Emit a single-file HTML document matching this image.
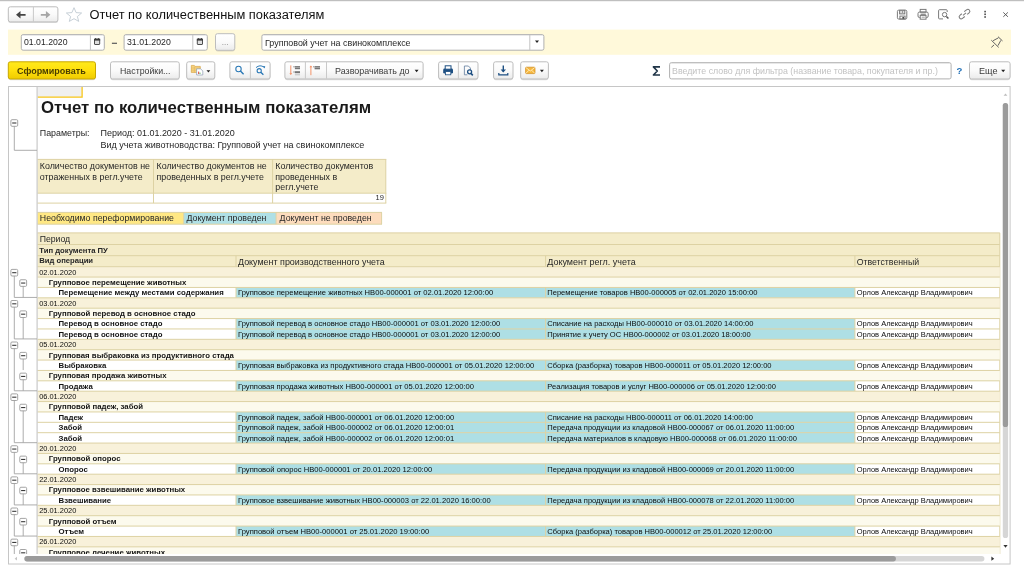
<!DOCTYPE html>
<html lang="ru"><head><meta charset="utf-8"><title>Отчет по количественным показателям</title>
<style>
html,body{margin:0;padding:0;background:#fff;}
body{width:1024px;height:572px;overflow:hidden;position:relative;filter:blur(0.35px);font-family:"Liberation Sans",sans-serif;}
svg{position:absolute;left:0;top:0;}
.t{position:absolute;white-space:nowrap;font-family:"Liberation Sans",sans-serif;}
#clip{position:absolute;left:9px;top:87px;width:992px;height:467px;overflow:hidden;}
#clip>div{position:absolute;left:-9px;top:-87px;width:1024px;height:572px;}
</style></head><body>
<svg width="1024" height="572" viewBox="0 0 1024 572">
<defs>
<linearGradient id="gb" x1="0" y1="0" x2="0" y2="1"><stop offset="0" stop-color="#ffffff"/><stop offset="0.5" stop-color="#fafafa"/><stop offset="1" stop-color="#ebebeb"/></linearGradient>
<linearGradient id="yb" x1="0" y1="0" x2="0" y2="1"><stop offset="0" stop-color="#ffea1c"/><stop offset="0.5" stop-color="#ffdf0c"/><stop offset="1" stop-color="#efcb00"/></linearGradient>
</defs>
<rect x="0.00" y="0.00" width="1024.00" height="1.20" fill="#bfbfbf" />
<rect x="8.30" y="7.50" width="49.60" height="15.60" rx="2.2" fill="#000" opacity="0.13"/>
<rect x="8.30" y="6.80" width="49.60" height="15.10" rx="2" fill="url(#gb)" stroke="#bdbdbd" stroke-width="1"/>
<line x1="33.40" y1="7.00" x2="33.40" y2="21.80" stroke="#c9c9c9" stroke-width="1" />
<path d="M16 14.8 L20.5 11 V13.9 H25.6 V15.7 H20.5 V18.5Z" fill="#444"/>
<path d="M50.4 14.8 L45.9 11 V13.9 H40.8 V15.7 H45.9 V18.5Z" fill="#a6a6a6"/>
<path d="M74 7.7 L76.1 12.6 L81.6 13 L77.4 16.5 L78.7 21.4 L74 18.7 L69.3 21.4 L70.6 16.5 L66.4 13 L71.9 12.6Z" fill="#fff" stroke="#b9c4cd" stroke-width="0.8" stroke-linejoin="miter"/>
<g fill="none" stroke="#7a7a7a" stroke-width="1"><rect x="897.4" y="10.2" width="9.4" height="8.8" rx="1.2"/><rect x="899.6" y="10.3" width="5.2" height="3.6" fill="#dcdcdc"/><rect x="899.9" y="16.1" width="5.2" height="3"/><rect x="902.4" y="17" width="1.7" height="1.7" fill="#444" stroke="none"/><rect x="902" y="11" width="1" height="2" fill="#999" stroke="none"/></g>
<g fill="none" stroke="#7a7a7a" stroke-width="1"><rect x="918" y="12" width="10.2" height="5.6" rx="1.6"/><rect x="920.2" y="9.4" width="5.8" height="2.8"/><rect x="920.2" y="15.4" width="5.8" height="3.8" fill="#fff"/><path d="M920.6 14.2 H925.8" stroke="#555" stroke-width="0.9"/><path d="M921.6 17.2 H924.8" stroke-width="0.7"/></g>
<g fill="none" stroke="#7a7a7a" stroke-width="1"><path d="M947.2 12 V10.6 Q947.2 9.7 946.3 9.7 H939.5 Q938.6 9.7 938.6 10.6 V18 Q938.6 18.9 939.5 18.9 H943"/><circle cx="944.6" cy="14.6" r="2.2"/><path d="M946.4 16.4 L948.4 18.5" stroke="#555" stroke-width="1.4"/></g>
<g fill="none" stroke="#7a7a7a" stroke-width="1.15" stroke="#6a6a6a" transform="rotate(-40 964.5 14.1) translate(964.5 14.1) scale(0.88) translate(-964.5 -14.1)"><path d="M963 16.4 H959.6 A2.3 2.3 0 0 1 959.6 11.8 H962.4"/><path d="M966 11.8 H969.4 A2.3 2.3 0 0 1 969.4 16.4 H966.6"/><path d="M962.2 14.1 H966.8"/></g>
<rect x="984.30" y="10.80" width="1.60" height="1.60" fill="#4a4a4a" />
<rect x="984.30" y="13.50" width="1.60" height="1.60" fill="#4a4a4a" />
<rect x="984.30" y="16.20" width="1.60" height="1.60" fill="#4a4a4a" />
<path d="M1003.3 12.4 L1007.9 16.8 M1007.9 12.4 L1003.3 16.8" stroke="#505050" stroke-width="0.9" fill="none"/>
<rect x="8.00" y="29.60" width="1003.00" height="25.20" fill="#fff9da" />
<rect x="21.30" y="34.60" width="83.00" height="15.60" rx="1.8" fill="#fff" stroke="#b0b0b0" stroke-width="1"/>
<line x1="22.30" y1="35.40" x2="103.30" y2="35.40" stroke="#e4e4e4" stroke-width="0.8" />
<line x1="90.40" y1="35.00" x2="90.40" y2="50.00" stroke="#c4c4c4" stroke-width="1" />
<g><rect x="94.50" y="39.20" width="5.2" height="5.3" rx="0.5" fill="#dedede" stroke="#3c3c3c" stroke-width="0.9"/><rect x="94.05" y="38.70" width="6.1" height="1.9" fill="#3c3c3c"/><rect x="95.10" y="38.10" width="0.9" height="1.2" fill="#3c3c3c"/><rect x="98.20" y="38.10" width="0.9" height="1.2" fill="#3c3c3c"/></g>
<rect x="111.90" y="42.70" width="5.10" height="1.20" fill="#5a5a5a" />
<rect x="124.10" y="34.60" width="83.20" height="15.60" rx="1.8" fill="#fff" stroke="#b0b0b0" stroke-width="1"/>
<line x1="125.10" y1="35.40" x2="206.30" y2="35.40" stroke="#e4e4e4" stroke-width="0.8" />
<line x1="192.80" y1="35.00" x2="192.80" y2="50.00" stroke="#c4c4c4" stroke-width="1" />
<g><rect x="197.30" y="39.20" width="5.2" height="5.3" rx="0.5" fill="#dedede" stroke="#3c3c3c" stroke-width="0.9"/><rect x="196.85" y="38.70" width="6.1" height="1.9" fill="#3c3c3c"/><rect x="197.90" y="38.10" width="0.9" height="1.2" fill="#3c3c3c"/><rect x="201.00" y="38.10" width="0.9" height="1.2" fill="#3c3c3c"/></g>
<rect x="215.50" y="34.40" width="19.30" height="17.10" rx="2.2" fill="#000" opacity="0.13"/>
<rect x="215.50" y="33.70" width="19.30" height="16.60" rx="2" fill="url(#gb)" stroke="#bdbdbd" stroke-width="1"/>
<rect x="261.90" y="34.60" width="282.00" height="15.60" rx="1.8" fill="#fff" stroke="#b0b0b0" stroke-width="1"/>
<line x1="262.90" y1="35.40" x2="542.90" y2="35.40" stroke="#e4e4e4" stroke-width="0.8" />
<line x1="529.80" y1="35.00" x2="529.80" y2="50.00" stroke="#c4c4c4" stroke-width="1" />
<path d="M535.00 40.60 L539.00 40.60 L537.00 43.10Z" fill="#222"/>
<path d="M998 36.7 L1002.5 40.9 M998.3 37.9 L993.1 40.7 M1000.8 40.4 L998 45.6 M991.3 40.2 L998.7 47.4 M994.1 44.9 L991.3 47.4" fill="none" stroke="#5c5c5c" stroke-width="0.95"/>
<rect x="8.30" y="62.50" width="87.20" height="17.70" rx="2.2" fill="#000" opacity="0.13"/>
<rect x="8.30" y="61.80" width="87.20" height="17.20" rx="2" fill="url(#yb)" stroke="#c9a800" stroke-width="1"/>
<rect x="110.50" y="62.50" width="68.80" height="17.70" rx="2.2" fill="#000" opacity="0.13"/>
<rect x="110.50" y="61.80" width="68.80" height="17.20" rx="2" fill="url(#gb)" stroke="#bdbdbd" stroke-width="1"/>
<rect x="186.70" y="62.50" width="28.10" height="17.70" rx="2.2" fill="#000" opacity="0.13"/>
<rect x="186.70" y="61.80" width="28.10" height="17.20" rx="2" fill="url(#gb)" stroke="#bdbdbd" stroke-width="1"/>
<g><path d="M191.3 65.4 h3 l0.8 1 h5.2 v6 h-9z" fill="#f6d27f" stroke="#d7a545" stroke-width="0.7"/><path d="M191.3 68 h9 M191.3 70.2 h9 M194.4 66.4 v6 " stroke="#dcae55" stroke-width="0.45"/><path d="M196.6 68.8 h4 l2.2 2.2 v4 h-6.2z" fill="#fff" stroke="#8b9cb3" stroke-width="0.7"/><rect x="198" y="71.6" width="1.2" height="2.4" fill="#e0605c"/><rect x="199.4" y="72.6" width="1.1" height="1.4" fill="#6cc06c"/></g>
<path d="M206.50 70.15 L210.30 70.15 L208.40 72.52Z" fill="#222"/>
<rect x="229.90" y="62.50" width="40.20" height="17.70" rx="2.2" fill="#000" opacity="0.13"/>
<rect x="229.90" y="61.80" width="40.20" height="17.20" rx="2" fill="url(#gb)" stroke="#bdbdbd" stroke-width="1"/>
<line x1="250.40" y1="62.00" x2="250.40" y2="78.80" stroke="#c9c9c9" stroke-width="1" />
<g fill="none" stroke="#2877b5" stroke-width="1.05"><circle cx="238.5" cy="69" r="2.7"/><path d="M240.4 71 L243.6 74.2" stroke-width="1.35"/></g>
<g fill="none" stroke="#2877b5" stroke-width="1.05"><circle cx="259.2" cy="70.7" r="2.1"/><path d="M260.8 72.3 L263.4 74.7" stroke-width="1.3"/><path d="M256 67.6 Q260 64.2 264 67.2" stroke-width="0.95"/><path d="M262.8 66 L265.2 66.2 L264.8 68.6Z" fill="#2877b5" stroke="none"/></g>
<rect x="284.90" y="62.50" width="138.20" height="17.70" rx="2.2" fill="#000" opacity="0.13"/>
<rect x="284.90" y="61.80" width="138.20" height="17.20" rx="2" fill="url(#gb)" stroke="#bdbdbd" stroke-width="1"/>
<line x1="305.40" y1="62.00" x2="305.40" y2="78.80" stroke="#c9c9c9" stroke-width="1" />
<line x1="326.50" y1="62.00" x2="326.50" y2="78.80" stroke="#c9c9c9" stroke-width="1" />
<g><path d="M290.8 65.4 V73.6" stroke="#f2885a" stroke-width="0.9"/><path d="M289.4 73.2 h2.8 l-1.4 1.9z" fill="#f2885a"/></g>
<rect x="294.90" y="66.10" width="5.10" height="3.10" fill="#5e5e5e" opacity="0.85"/>
<rect x="293.40" y="66.30" width="1.20" height="1.00" fill="#777" />
<rect x="294.90" y="67.40" width="5.10" height="0.50" fill="#cfcfcf" />
<rect x="294.90" y="71.20" width="5.10" height="1.90" fill="#5e5e5e" opacity="0.85"/>
<rect x="293.40" y="71.50" width="1.20" height="1.00" fill="#777" />
<rect x="294.90" y="73.60" width="5.10" height="1.80" fill="#bdbdbd" opacity="0.7"/>
<g><path d="M310.9 66.8 V75.2" stroke="#f2885a" stroke-width="0.9"/><path d="M309.5 67.3 h2.8 l-1.4 -1.9z" fill="#f2885a"/></g>
<rect x="314.60" y="66.10" width="5.40" height="3.20" fill="#5e5e5e" opacity="0.85"/>
<rect x="313.20" y="66.30" width="1.10" height="1.00" fill="#777" />
<rect x="314.60" y="67.50" width="5.40" height="0.50" fill="#cfcfcf" />
<path d="M414.60 69.80 L418.60 69.80 L416.60 72.30Z" fill="#222"/>
<rect x="438.60" y="62.50" width="39.40" height="17.70" rx="2.2" fill="#000" opacity="0.13"/>
<rect x="438.60" y="61.80" width="39.40" height="17.20" rx="2" fill="url(#gb)" stroke="#bdbdbd" stroke-width="1"/>
<line x1="458.40" y1="62.00" x2="458.40" y2="78.80" stroke="#c9c9c9" stroke-width="1" />
<g><rect x="443.2" y="68.6" width="9.8" height="5" rx="1.4" fill="#1d4f82"/><rect x="445.2" y="65.8" width="5.8" height="3.4" fill="#fff" stroke="#1d4f82" stroke-width="1"/><rect x="445.4" y="71.6" width="5.4" height="3.2" fill="#fff" stroke="#1d4f82" stroke-width="0.8"/></g>
<g fill="none"><path d="M464.4 66 h4 l2 2 v2 M464.4 66 v8.8 h3" stroke="#6f88a6" stroke-width="0.9"/><circle cx="469.6" cy="71.8" r="2" stroke="#1d4f82" stroke-width="1.3"/><path d="M471 73.4 L472.8 75.4" stroke="#1d4f82" stroke-width="1.6"/></g>
<rect x="493.60" y="62.50" width="19.40" height="17.70" rx="2.2" fill="#000" opacity="0.13"/>
<rect x="493.60" y="61.80" width="19.40" height="17.20" rx="2" fill="url(#gb)" stroke="#bdbdbd" stroke-width="1"/>
<g fill="none" stroke="#1d4f82"><path d="M503.3 65.6 V71.4" stroke-width="1.4"/><path d="M500.6 69.6 h5.4 l-2.7 3z" fill="#1d4f82" stroke="none"/><path d="M498.8 73 V74.8 H507.8 V73" stroke-width="1.2"/></g>
<rect x="520.70" y="62.50" width="27.70" height="17.70" rx="2.2" fill="#000" opacity="0.13"/>
<rect x="520.70" y="61.80" width="27.70" height="17.20" rx="2" fill="url(#gb)" stroke="#bdbdbd" stroke-width="1"/>
<g><rect x="525.6" y="67.2" width="9.4" height="6.4" rx="0.8" fill="#f6b73c" stroke="#d18a1a" stroke-width="0.7"/><path d="M525.9 67.6 L530.3 71 L534.7 67.6 M525.9 73.3 L529 70.2 M534.7 73.3 L531.6 70.2" fill="none" stroke="#fff2cf" stroke-width="0.8"/></g>
<path d="M539.90 69.80 L543.90 69.80 L541.90 72.30Z" fill="#222"/>
<path d="M660 66.9 H653.4 L657.3 71 L653.4 75 H660" fill="none" stroke="#1f3447" stroke-width="1.6" stroke-linejoin="round"/>
<rect x="669.60" y="62.70" width="281.50" height="16.20" rx="1.8" fill="#fff" stroke="#b0b0b0" stroke-width="1"/>
<line x1="670.60" y1="63.50" x2="950.10" y2="63.50" stroke="#e4e4e4" stroke-width="0.8" />
<rect x="969.50" y="62.50" width="40.60" height="17.70" rx="2.2" fill="#000" opacity="0.13"/>
<rect x="969.50" y="61.80" width="40.60" height="17.20" rx="2" fill="url(#gb)" stroke="#bdbdbd" stroke-width="1"/>
<path d="M1001.20 69.80 L1005.20 69.80 L1003.20 72.30Z" fill="#222"/>
<rect x="8.5" y="86.5" width="1001.6" height="477.5" fill="#fff" stroke="#c6c6c6" stroke-width="1"/>
<clipPath id="cp"><rect x="9" y="87" width="992" height="467"/></clipPath>
<g clip-path="url(#cp)">
<rect x="37.60" y="87.00" width="44.20" height="10.00" fill="#f0f0f0" />
<path d="M37.6 97.1 H82.1 V87" fill="none" stroke="#f7c61a" stroke-width="1.3"/>
<rect x="37.40" y="159.40" width="348.40" height="33.80" fill="#f4ecc9" />
<rect x="37.40" y="193.20" width="348.40" height="9.90" fill="#fff" />
<line x1="153.50" y1="159.40" x2="153.50" y2="203.10" stroke="#ddd2a3" stroke-width="1" />
<line x1="272.60" y1="159.40" x2="272.60" y2="203.10" stroke="#ddd2a3" stroke-width="1" />
<line x1="385.80" y1="159.40" x2="385.80" y2="203.10" stroke="#ddd2a3" stroke-width="1" />
<line x1="37.40" y1="159.40" x2="386.30" y2="159.40" stroke="#ddd2a3" stroke-width="1" />
<line x1="37.40" y1="193.20" x2="386.30" y2="193.20" stroke="#ddd2a3" stroke-width="1" />
<line x1="37.40" y1="203.10" x2="386.30" y2="203.10" stroke="#ddd2a3" stroke-width="1" />
<rect x="37.40" y="212.40" width="146.30" height="11.80" fill="#ffe884" />
<rect x="183.70" y="212.40" width="92.40" height="11.80" fill="#afe0e6" />
<rect x="276.10" y="212.40" width="105.50" height="11.80" fill="#fddcbd" />
<line x1="183.70" y1="212.40" x2="183.70" y2="224.20" stroke="#ddd2a3" stroke-width="1" />
<line x1="276.10" y1="212.40" x2="276.10" y2="224.20" stroke="#ddd2a3" stroke-width="1" />
<line x1="381.60" y1="212.40" x2="381.60" y2="224.20" stroke="#ddd2a3" stroke-width="1" />
<line x1="37.40" y1="212.40" x2="382.00" y2="212.40" stroke="#ddd2a3" stroke-width="1" />
<line x1="37.40" y1="224.20" x2="382.00" y2="224.20" stroke="#ddd2a3" stroke-width="1" />
<rect x="37.40" y="232.90" width="962.40" height="33.80" fill="#f4ecc9" />
<line x1="37.40" y1="232.90" x2="999.80" y2="232.90" stroke="#ddd2a3" stroke-width="1" />
<line x1="37.40" y1="244.50" x2="999.80" y2="244.50" stroke="#ddd2a3" stroke-width="1" />
<line x1="37.40" y1="255.70" x2="999.80" y2="255.70" stroke="#ddd2a3" stroke-width="1" />
<line x1="236.00" y1="255.70" x2="236.00" y2="266.70" stroke="#ddd2a3" stroke-width="1" />
<line x1="545.60" y1="255.70" x2="545.60" y2="266.70" stroke="#ddd2a3" stroke-width="1" />
<line x1="854.90" y1="255.70" x2="854.90" y2="266.70" stroke="#ddd2a3" stroke-width="1" />
<line x1="999.80" y1="232.90" x2="999.80" y2="554.00" stroke="#ddd2a3" stroke-width="1" />
<rect x="37.40" y="266.70" width="962.40" height="10.38" fill="#f8f1da" />
<line x1="37.40" y1="266.70" x2="999.80" y2="266.70" stroke="#ddd2a3" stroke-width="1" />
<rect x="37.40" y="277.07" width="962.40" height="10.38" fill="#fcfaed" />
<line x1="37.40" y1="277.07" x2="999.80" y2="277.07" stroke="#ddd2a3" stroke-width="1" />
<rect x="236.00" y="287.45" width="618.90" height="10.38" fill="#aedfe5" />
<line x1="236.00" y1="287.45" x2="236.00" y2="297.82" stroke="#ddd2a3" stroke-width="1" />
<line x1="545.60" y1="287.45" x2="545.60" y2="297.82" stroke="#ddd2a3" stroke-width="1" />
<line x1="854.90" y1="287.45" x2="854.90" y2="297.82" stroke="#ddd2a3" stroke-width="1" />
<line x1="37.40" y1="287.45" x2="999.80" y2="287.45" stroke="#ddd2a3" stroke-width="1" />
<rect x="37.40" y="297.82" width="962.40" height="10.38" fill="#f8f1da" />
<line x1="37.40" y1="297.82" x2="999.80" y2="297.82" stroke="#ddd2a3" stroke-width="1" />
<rect x="37.40" y="308.20" width="962.40" height="10.38" fill="#fcfaed" />
<line x1="37.40" y1="308.20" x2="999.80" y2="308.20" stroke="#ddd2a3" stroke-width="1" />
<rect x="236.00" y="318.57" width="618.90" height="10.38" fill="#aedfe5" />
<line x1="236.00" y1="318.57" x2="236.00" y2="328.95" stroke="#ddd2a3" stroke-width="1" />
<line x1="545.60" y1="318.57" x2="545.60" y2="328.95" stroke="#ddd2a3" stroke-width="1" />
<line x1="854.90" y1="318.57" x2="854.90" y2="328.95" stroke="#ddd2a3" stroke-width="1" />
<line x1="37.40" y1="318.57" x2="999.80" y2="318.57" stroke="#ddd2a3" stroke-width="1" />
<rect x="236.00" y="328.95" width="618.90" height="10.38" fill="#aedfe5" />
<line x1="236.00" y1="328.95" x2="236.00" y2="339.32" stroke="#ddd2a3" stroke-width="1" />
<line x1="545.60" y1="328.95" x2="545.60" y2="339.32" stroke="#ddd2a3" stroke-width="1" />
<line x1="854.90" y1="328.95" x2="854.90" y2="339.32" stroke="#ddd2a3" stroke-width="1" />
<line x1="37.40" y1="328.95" x2="999.80" y2="328.95" stroke="#ddd2a3" stroke-width="1" />
<rect x="37.40" y="339.32" width="962.40" height="10.38" fill="#f8f1da" />
<line x1="37.40" y1="339.32" x2="999.80" y2="339.32" stroke="#ddd2a3" stroke-width="1" />
<rect x="37.40" y="349.70" width="962.40" height="10.38" fill="#fcfaed" />
<line x1="37.40" y1="349.70" x2="999.80" y2="349.70" stroke="#ddd2a3" stroke-width="1" />
<rect x="236.00" y="360.07" width="618.90" height="10.38" fill="#aedfe5" />
<line x1="236.00" y1="360.07" x2="236.00" y2="370.45" stroke="#ddd2a3" stroke-width="1" />
<line x1="545.60" y1="360.07" x2="545.60" y2="370.45" stroke="#ddd2a3" stroke-width="1" />
<line x1="854.90" y1="360.07" x2="854.90" y2="370.45" stroke="#ddd2a3" stroke-width="1" />
<line x1="37.40" y1="360.07" x2="999.80" y2="360.07" stroke="#ddd2a3" stroke-width="1" />
<rect x="37.40" y="370.45" width="962.40" height="10.38" fill="#fcfaed" />
<line x1="37.40" y1="370.45" x2="999.80" y2="370.45" stroke="#ddd2a3" stroke-width="1" />
<rect x="236.00" y="380.82" width="618.90" height="10.38" fill="#aedfe5" />
<line x1="236.00" y1="380.82" x2="236.00" y2="391.20" stroke="#ddd2a3" stroke-width="1" />
<line x1="545.60" y1="380.82" x2="545.60" y2="391.20" stroke="#ddd2a3" stroke-width="1" />
<line x1="854.90" y1="380.82" x2="854.90" y2="391.20" stroke="#ddd2a3" stroke-width="1" />
<line x1="37.40" y1="380.82" x2="999.80" y2="380.82" stroke="#ddd2a3" stroke-width="1" />
<rect x="37.40" y="391.20" width="962.40" height="10.38" fill="#f8f1da" />
<line x1="37.40" y1="391.20" x2="999.80" y2="391.20" stroke="#ddd2a3" stroke-width="1" />
<rect x="37.40" y="401.57" width="962.40" height="10.38" fill="#fcfaed" />
<line x1="37.40" y1="401.57" x2="999.80" y2="401.57" stroke="#ddd2a3" stroke-width="1" />
<rect x="236.00" y="411.95" width="618.90" height="10.38" fill="#aedfe5" />
<line x1="236.00" y1="411.95" x2="236.00" y2="422.32" stroke="#ddd2a3" stroke-width="1" />
<line x1="545.60" y1="411.95" x2="545.60" y2="422.32" stroke="#ddd2a3" stroke-width="1" />
<line x1="854.90" y1="411.95" x2="854.90" y2="422.32" stroke="#ddd2a3" stroke-width="1" />
<line x1="37.40" y1="411.95" x2="999.80" y2="411.95" stroke="#ddd2a3" stroke-width="1" />
<rect x="236.00" y="422.32" width="618.90" height="10.38" fill="#aedfe5" />
<line x1="236.00" y1="422.32" x2="236.00" y2="432.70" stroke="#ddd2a3" stroke-width="1" />
<line x1="545.60" y1="422.32" x2="545.60" y2="432.70" stroke="#ddd2a3" stroke-width="1" />
<line x1="854.90" y1="422.32" x2="854.90" y2="432.70" stroke="#ddd2a3" stroke-width="1" />
<line x1="37.40" y1="422.32" x2="999.80" y2="422.32" stroke="#ddd2a3" stroke-width="1" />
<rect x="236.00" y="432.70" width="618.90" height="10.38" fill="#aedfe5" />
<line x1="236.00" y1="432.70" x2="236.00" y2="443.07" stroke="#ddd2a3" stroke-width="1" />
<line x1="545.60" y1="432.70" x2="545.60" y2="443.07" stroke="#ddd2a3" stroke-width="1" />
<line x1="854.90" y1="432.70" x2="854.90" y2="443.07" stroke="#ddd2a3" stroke-width="1" />
<line x1="37.40" y1="432.70" x2="999.80" y2="432.70" stroke="#ddd2a3" stroke-width="1" />
<rect x="37.40" y="443.07" width="962.40" height="10.38" fill="#f8f1da" />
<line x1="37.40" y1="443.07" x2="999.80" y2="443.07" stroke="#ddd2a3" stroke-width="1" />
<rect x="37.40" y="453.45" width="962.40" height="10.38" fill="#fcfaed" />
<line x1="37.40" y1="453.45" x2="999.80" y2="453.45" stroke="#ddd2a3" stroke-width="1" />
<rect x="236.00" y="463.82" width="618.90" height="10.38" fill="#aedfe5" />
<line x1="236.00" y1="463.82" x2="236.00" y2="474.20" stroke="#ddd2a3" stroke-width="1" />
<line x1="545.60" y1="463.82" x2="545.60" y2="474.20" stroke="#ddd2a3" stroke-width="1" />
<line x1="854.90" y1="463.82" x2="854.90" y2="474.20" stroke="#ddd2a3" stroke-width="1" />
<line x1="37.40" y1="463.82" x2="999.80" y2="463.82" stroke="#ddd2a3" stroke-width="1" />
<rect x="37.40" y="474.20" width="962.40" height="10.38" fill="#f8f1da" />
<line x1="37.40" y1="474.20" x2="999.80" y2="474.20" stroke="#ddd2a3" stroke-width="1" />
<rect x="37.40" y="484.57" width="962.40" height="10.38" fill="#fcfaed" />
<line x1="37.40" y1="484.57" x2="999.80" y2="484.57" stroke="#ddd2a3" stroke-width="1" />
<rect x="236.00" y="494.95" width="618.90" height="10.38" fill="#aedfe5" />
<line x1="236.00" y1="494.95" x2="236.00" y2="505.32" stroke="#ddd2a3" stroke-width="1" />
<line x1="545.60" y1="494.95" x2="545.60" y2="505.32" stroke="#ddd2a3" stroke-width="1" />
<line x1="854.90" y1="494.95" x2="854.90" y2="505.32" stroke="#ddd2a3" stroke-width="1" />
<line x1="37.40" y1="494.95" x2="999.80" y2="494.95" stroke="#ddd2a3" stroke-width="1" />
<rect x="37.40" y="505.32" width="962.40" height="10.38" fill="#f8f1da" />
<line x1="37.40" y1="505.32" x2="999.80" y2="505.32" stroke="#ddd2a3" stroke-width="1" />
<rect x="37.40" y="515.70" width="962.40" height="10.38" fill="#fcfaed" />
<line x1="37.40" y1="515.70" x2="999.80" y2="515.70" stroke="#ddd2a3" stroke-width="1" />
<rect x="236.00" y="526.08" width="618.90" height="10.38" fill="#aedfe5" />
<line x1="236.00" y1="526.08" x2="236.00" y2="536.45" stroke="#ddd2a3" stroke-width="1" />
<line x1="545.60" y1="526.08" x2="545.60" y2="536.45" stroke="#ddd2a3" stroke-width="1" />
<line x1="854.90" y1="526.08" x2="854.90" y2="536.45" stroke="#ddd2a3" stroke-width="1" />
<line x1="37.40" y1="526.08" x2="999.80" y2="526.08" stroke="#ddd2a3" stroke-width="1" />
<rect x="37.40" y="536.45" width="962.40" height="10.38" fill="#f8f1da" />
<line x1="37.40" y1="536.45" x2="999.80" y2="536.45" stroke="#ddd2a3" stroke-width="1" />
<rect x="37.40" y="546.83" width="962.40" height="10.38" fill="#fcfaed" />
<line x1="37.40" y1="546.83" x2="999.80" y2="546.83" stroke="#ddd2a3" stroke-width="1" />
</g>
<g clip-path="url(#cp)">
<line x1="37.10" y1="87.00" x2="37.10" y2="554.00" stroke="#c9c9c9" stroke-width="1.2" />
<line x1="14.30" y1="123.00" x2="14.30" y2="150.30" stroke="#a4a4a4" stroke-width="0.9" />
<line x1="14.30" y1="150.30" x2="37.00" y2="150.30" stroke="#a4a4a4" stroke-width="0.9" />
<rect x="10.90" y="119.70" width="6.8" height="6.6" rx="1.1" fill="#fff" stroke="#9a9a9a" stroke-width="0.9"/>
<line x1="12.20" y1="123.00" x2="16.40" y2="123.00" stroke="#3a3a3a" stroke-width="1.1" />
<line x1="14.30" y1="272.69" x2="14.30" y2="297.43" stroke="#a4a4a4" stroke-width="0.9" />
<line x1="14.30" y1="297.43" x2="37.00" y2="297.43" stroke="#a4a4a4" stroke-width="0.9" />
<rect x="10.90" y="269.39" width="6.8" height="6.6" rx="1.1" fill="#fff" stroke="#9a9a9a" stroke-width="0.9"/>
<line x1="12.20" y1="272.69" x2="16.40" y2="272.69" stroke="#3a3a3a" stroke-width="1.1" />
<line x1="14.30" y1="303.81" x2="14.30" y2="338.93" stroke="#a4a4a4" stroke-width="0.9" />
<line x1="14.30" y1="338.93" x2="37.00" y2="338.93" stroke="#a4a4a4" stroke-width="0.9" />
<rect x="10.90" y="300.51" width="6.8" height="6.6" rx="1.1" fill="#fff" stroke="#9a9a9a" stroke-width="0.9"/>
<line x1="12.20" y1="303.81" x2="16.40" y2="303.81" stroke="#3a3a3a" stroke-width="1.1" />
<line x1="14.30" y1="345.31" x2="14.30" y2="390.80" stroke="#a4a4a4" stroke-width="0.9" />
<line x1="14.30" y1="390.80" x2="37.00" y2="390.80" stroke="#a4a4a4" stroke-width="0.9" />
<rect x="10.90" y="342.01" width="6.8" height="6.6" rx="1.1" fill="#fff" stroke="#9a9a9a" stroke-width="0.9"/>
<line x1="12.20" y1="345.31" x2="16.40" y2="345.31" stroke="#3a3a3a" stroke-width="1.1" />
<line x1="14.30" y1="397.19" x2="14.30" y2="442.68" stroke="#a4a4a4" stroke-width="0.9" />
<line x1="14.30" y1="442.68" x2="37.00" y2="442.68" stroke="#a4a4a4" stroke-width="0.9" />
<rect x="10.90" y="393.89" width="6.8" height="6.6" rx="1.1" fill="#fff" stroke="#9a9a9a" stroke-width="0.9"/>
<line x1="12.20" y1="397.19" x2="16.40" y2="397.19" stroke="#3a3a3a" stroke-width="1.1" />
<line x1="14.30" y1="449.06" x2="14.30" y2="473.80" stroke="#a4a4a4" stroke-width="0.9" />
<line x1="14.30" y1="473.80" x2="37.00" y2="473.80" stroke="#a4a4a4" stroke-width="0.9" />
<rect x="10.90" y="445.76" width="6.8" height="6.6" rx="1.1" fill="#fff" stroke="#9a9a9a" stroke-width="0.9"/>
<line x1="12.20" y1="449.06" x2="16.40" y2="449.06" stroke="#3a3a3a" stroke-width="1.1" />
<line x1="14.30" y1="480.19" x2="14.30" y2="504.93" stroke="#a4a4a4" stroke-width="0.9" />
<line x1="14.30" y1="504.93" x2="37.00" y2="504.93" stroke="#a4a4a4" stroke-width="0.9" />
<rect x="10.90" y="476.89" width="6.8" height="6.6" rx="1.1" fill="#fff" stroke="#9a9a9a" stroke-width="0.9"/>
<line x1="12.20" y1="480.19" x2="16.40" y2="480.19" stroke="#3a3a3a" stroke-width="1.1" />
<line x1="14.30" y1="511.31" x2="14.30" y2="536.05" stroke="#a4a4a4" stroke-width="0.9" />
<line x1="14.30" y1="536.05" x2="37.00" y2="536.05" stroke="#a4a4a4" stroke-width="0.9" />
<rect x="10.90" y="508.01" width="6.8" height="6.6" rx="1.1" fill="#fff" stroke="#9a9a9a" stroke-width="0.9"/>
<line x1="12.20" y1="511.31" x2="16.40" y2="511.31" stroke="#3a3a3a" stroke-width="1.1" />
<line x1="14.30" y1="542.44" x2="14.30" y2="556.80" stroke="#a4a4a4" stroke-width="0.9" />
<line x1="14.30" y1="556.80" x2="37.00" y2="556.80" stroke="#a4a4a4" stroke-width="0.9" />
<rect x="10.90" y="539.14" width="6.8" height="6.6" rx="1.1" fill="#fff" stroke="#9a9a9a" stroke-width="0.9"/>
<line x1="12.20" y1="542.44" x2="16.40" y2="542.44" stroke="#3a3a3a" stroke-width="1.1" />
<line x1="23.20" y1="283.06" x2="23.20" y2="297.43" stroke="#a4a4a4" stroke-width="0.9" />
<rect x="19.80" y="279.76" width="6.8" height="6.6" rx="1.1" fill="#fff" stroke="#9a9a9a" stroke-width="0.9"/>
<line x1="21.10" y1="283.06" x2="25.30" y2="283.06" stroke="#3a3a3a" stroke-width="1.1" />
<line x1="23.20" y1="314.19" x2="23.20" y2="338.93" stroke="#a4a4a4" stroke-width="0.9" />
<rect x="19.80" y="310.89" width="6.8" height="6.6" rx="1.1" fill="#fff" stroke="#9a9a9a" stroke-width="0.9"/>
<line x1="21.10" y1="314.19" x2="25.30" y2="314.19" stroke="#3a3a3a" stroke-width="1.1" />
<line x1="23.20" y1="355.69" x2="23.20" y2="370.05" stroke="#a4a4a4" stroke-width="0.9" />
<rect x="19.80" y="352.39" width="6.8" height="6.6" rx="1.1" fill="#fff" stroke="#9a9a9a" stroke-width="0.9"/>
<line x1="21.10" y1="355.69" x2="25.30" y2="355.69" stroke="#3a3a3a" stroke-width="1.1" />
<line x1="23.20" y1="376.44" x2="23.20" y2="390.80" stroke="#a4a4a4" stroke-width="0.9" />
<rect x="19.80" y="373.14" width="6.8" height="6.6" rx="1.1" fill="#fff" stroke="#9a9a9a" stroke-width="0.9"/>
<line x1="21.10" y1="376.44" x2="25.30" y2="376.44" stroke="#3a3a3a" stroke-width="1.1" />
<line x1="23.20" y1="407.56" x2="23.20" y2="442.68" stroke="#a4a4a4" stroke-width="0.9" />
<rect x="19.80" y="404.26" width="6.8" height="6.6" rx="1.1" fill="#fff" stroke="#9a9a9a" stroke-width="0.9"/>
<line x1="21.10" y1="407.56" x2="25.30" y2="407.56" stroke="#3a3a3a" stroke-width="1.1" />
<line x1="23.20" y1="459.44" x2="23.20" y2="473.80" stroke="#a4a4a4" stroke-width="0.9" />
<rect x="19.80" y="456.14" width="6.8" height="6.6" rx="1.1" fill="#fff" stroke="#9a9a9a" stroke-width="0.9"/>
<line x1="21.10" y1="459.44" x2="25.30" y2="459.44" stroke="#3a3a3a" stroke-width="1.1" />
<line x1="23.20" y1="490.56" x2="23.20" y2="504.93" stroke="#a4a4a4" stroke-width="0.9" />
<rect x="19.80" y="487.26" width="6.8" height="6.6" rx="1.1" fill="#fff" stroke="#9a9a9a" stroke-width="0.9"/>
<line x1="21.10" y1="490.56" x2="25.30" y2="490.56" stroke="#3a3a3a" stroke-width="1.1" />
<line x1="23.20" y1="521.69" x2="23.20" y2="536.05" stroke="#a4a4a4" stroke-width="0.9" />
<rect x="19.80" y="518.39" width="6.8" height="6.6" rx="1.1" fill="#fff" stroke="#9a9a9a" stroke-width="0.9"/>
<line x1="21.10" y1="521.69" x2="25.30" y2="521.69" stroke="#3a3a3a" stroke-width="1.1" />
<line x1="23.20" y1="552.81" x2="23.20" y2="556.80" stroke="#a4a4a4" stroke-width="0.9" />
<rect x="19.80" y="549.51" width="6.8" height="6.6" rx="1.1" fill="#fff" stroke="#9a9a9a" stroke-width="0.9"/>
<line x1="21.10" y1="552.81" x2="25.30" y2="552.81" stroke="#3a3a3a" stroke-width="1.1" />
</g>
<rect x="1002.8" y="103" width="5.3" height="435" rx="2.6" fill="#d6d6d6"/>
<rect x="1002.8" y="103" width="5.3" height="324" rx="2.6" fill="#9b9b9b"/>
<path d="M1003.6 95.8 h3.8 l-1.9 -2.4z" fill="#bcbcbc"/>
<path d="M1003.4 545 h4.2 l-2.1 2.8z" fill="#333"/>
<rect x="24.4" y="556" width="960" height="5.4" rx="2.7" fill="#d6d6d6"/>
<rect x="24.4" y="556" width="871.5" height="5.4" rx="2.7" fill="#9b9b9b"/>
<path d="M17 556.8 v3.8 l-2.4 -1.9z" fill="#c4c4c4"/>
<path d="M991.4 556.6 v4.2 l2.8 -2.1z" fill="#333"/>
</svg>
<div class="t" style="top:7px;font-size:12.85px;line-height:15px;color:#111;left:89.40px;">Отчет по количественным показателям</div>
<div class="t" style="top:37px;font-size:9.2px;line-height:10px;color:#262626;left:23.90px;transform:scaleX(0.9469);transform-origin:left center;">01.01.2020</div>
<div class="t" style="top:37px;font-size:9.2px;line-height:10px;color:#262626;left:126.70px;transform:scaleX(0.9512);transform-origin:left center;">31.01.2020</div>
<div class="t" style="top:38px;font-size:8px;line-height:9px;color:#777;left:221.80px;">...</div>
<div class="t" style="top:38px;font-size:9.2px;line-height:10px;color:#262626;left:264.80px;transform:scaleX(0.9705);transform-origin:left center;">Групповой учет на свинокомплексе</div>
<div class="t" style="top:66px;font-size:9.2px;line-height:10px;color:#4a3e00;left:17.40px;font-weight:bold;transform:scaleX(0.9817);transform-origin:left center;">Сформировать</div>
<div class="t" style="top:66px;font-size:9.2px;line-height:10px;color:#3a3a3a;left:119.60px;transform:scaleX(0.9568);transform-origin:left center;">Настройки...</div>
<div class="t" style="top:66px;font-size:9.2px;line-height:10px;color:#3a3a3a;left:335.00px;transform:scaleX(0.9743);transform-origin:left center;">Разворачивать до</div>
<div class="t" style="top:66px;font-size:9.2px;line-height:10px;color:#c2c2c2;left:671.50px;transform:scaleX(0.962);transform-origin:left center;">Введите слово для фильтра (название товара, покупателя и пр.)</div>
<div class="t" style="top:65px;font-size:9.6px;line-height:11px;color:#2673b8;left:956.40px;font-weight:bold;">?</div>
<div class="t" style="top:66px;font-size:9.2px;line-height:10px;color:#3a3a3a;left:978.50px;transform:scaleX(0.9883);transform-origin:left center;">Еще</div>
<div id="clip"><div>
<div class="t" style="top:98px;font-size:16.75px;line-height:19px;color:#1a1a1a;left:41.00px;font-weight:bold;">Отчет по количественным показателям</div>
<div class="t" style="top:128px;font-size:8.87px;line-height:10px;color:#262626;left:39.80px;">Параметры:</div>
<div class="t" style="top:128px;font-size:8.98px;line-height:10px;color:#262626;left:100.50px;">Период: 01.01.2020 - 31.01.2020</div>
<div class="t" style="top:140px;font-size:9.0px;line-height:10px;color:#262626;left:100.50px;">Вид учета животноводства: Групповой учет на свинокомплексе</div>
<div class="t" style="top:161px;font-size:8.87px;line-height:10px;color:#262626;left:39.80px;">Количество документов не</div>
<div class="t" style="top:172px;font-size:8.87px;line-height:10px;color:#262626;left:39.80px;">отраженных в регл.учете</div>
<div class="t" style="top:161px;font-size:8.87px;line-height:10px;color:#262626;left:156.50px;">Количество документов не</div>
<div class="t" style="top:172px;font-size:8.87px;line-height:10px;color:#262626;left:156.50px;">проведенных в регл.учете</div>
<div class="t" style="top:161px;font-size:8.87px;line-height:10px;color:#262626;left:275.30px;">Количество документов</div>
<div class="t" style="top:172px;font-size:8.87px;line-height:10px;color:#262626;left:275.30px;">проведенных в</div>
<div class="t" style="top:182px;font-size:8.87px;line-height:10px;color:#262626;left:275.30px;">регл.учете</div>
<div class="t" style="top:193px;font-size:7.5px;line-height:9px;color:#262626;right:640.20px;">19</div>
<div class="t" style="top:213px;font-size:8.78px;line-height:10px;color:#262626;left:39.80px;">Необходимо переформирование</div>
<div class="t" style="top:213px;font-size:8.78px;line-height:10px;color:#262626;left:186.50px;">Документ проведен</div>
<div class="t" style="top:213px;font-size:8.78px;line-height:10px;color:#262626;left:279.60px;">Документ не проведен</div>
<div class="t" style="top:234px;font-size:8.7px;line-height:10px;color:#262626;left:39.70px;">Период</div>
<div class="t" style="top:246px;font-size:7.7px;line-height:9px;color:#262626;left:39.30px;font-weight:bold;">Тип документа ПУ</div>
<div class="t" style="top:256px;font-size:7.65px;line-height:9px;color:#262626;left:39.30px;font-weight:bold;">Вид операции</div>
<div class="t" style="top:257px;font-size:8.94px;line-height:10px;color:#262626;left:238.00px;">Документ производственного учета</div>
<div class="t" style="top:257px;font-size:8.97px;line-height:10px;color:#262626;left:547.30px;">Документ регл. учета</div>
<div class="t" style="top:257px;font-size:8.74px;line-height:10px;color:#262626;left:856.70px;">Ответственный</div>
<div class="t" style="top:268px;font-size:7.42px;line-height:9px;color:#0c0c0c;left:39.20px;">02.01.2020</div>
<div class="t" style="top:278px;font-size:7.8px;line-height:9px;color:#141414;left:48.80px;font-weight:bold;">Групповое перемещение животных</div>
<div class="t" style="top:288px;font-size:7.8px;line-height:9px;color:#141414;left:58.50px;font-weight:bold;">Перемещение между местами содержания</div>
<div class="t" style="top:288px;font-size:7.62px;line-height:9px;color:#0c0c0c;left:238.00px;">Групповое перемещение животных НВ00-000001 от 02.01.2020 12:00:00</div>
<div class="t" style="top:288px;font-size:7.56px;line-height:9px;color:#0c0c0c;left:547.30px;">Перемещение товаров НВ00-000005 от 02.01.2020 15:00:00</div>
<div class="t" style="top:288px;font-size:7.5px;line-height:9px;color:#0c0c0c;left:856.70px;">Орлов Александр Владимирович</div>
<div class="t" style="top:299px;font-size:7.42px;line-height:9px;color:#0c0c0c;left:39.20px;">03.01.2020</div>
<div class="t" style="top:309px;font-size:7.8px;line-height:9px;color:#141414;left:48.80px;font-weight:bold;">Групповой перевод в основное стадо</div>
<div class="t" style="top:319px;font-size:7.8px;line-height:9px;color:#141414;left:58.50px;font-weight:bold;">Перевод в основное стадо</div>
<div class="t" style="top:319px;font-size:7.62px;line-height:9px;color:#0c0c0c;left:238.00px;">Групповой перевод в основное стадо НВ00-000001 от 03.01.2020 12:00:00</div>
<div class="t" style="top:319px;font-size:7.56px;line-height:9px;color:#0c0c0c;left:547.30px;">Списание на расходы НВ00-000010 от 03.01.2020 14:00:00</div>
<div class="t" style="top:319px;font-size:7.5px;line-height:9px;color:#0c0c0c;left:856.70px;">Орлов Александр Владимирович</div>
<div class="t" style="top:330px;font-size:7.8px;line-height:9px;color:#141414;left:58.50px;font-weight:bold;">Перевод в основное стадо</div>
<div class="t" style="top:330px;font-size:7.62px;line-height:9px;color:#0c0c0c;left:238.00px;">Групповой перевод в основное стадо НВ00-000001 от 03.01.2020 12:00:00</div>
<div class="t" style="top:330px;font-size:7.56px;line-height:9px;color:#0c0c0c;left:547.30px;">Принятие к учету ОС НВ00-000002 от 03.01.2020 18:00:00</div>
<div class="t" style="top:330px;font-size:7.5px;line-height:9px;color:#0c0c0c;left:856.70px;">Орлов Александр Владимирович</div>
<div class="t" style="top:340px;font-size:7.42px;line-height:9px;color:#0c0c0c;left:39.20px;">05.01.2020</div>
<div class="t" style="top:351px;font-size:7.8px;line-height:9px;color:#141414;left:48.80px;font-weight:bold;">Групповая выбраковка из продуктивного стада</div>
<div class="t" style="top:361px;font-size:7.8px;line-height:9px;color:#141414;left:58.50px;font-weight:bold;">Выбраковка</div>
<div class="t" style="top:361px;font-size:7.62px;line-height:9px;color:#0c0c0c;left:238.00px;">Групповая выбраковка из продуктивного стада НВ00-000001 от 05.01.2020 12:00:00</div>
<div class="t" style="top:361px;font-size:7.56px;line-height:9px;color:#0c0c0c;left:547.30px;">Сборка (разборка) товаров НВ00-000011 от 05.01.2020 12:00:00</div>
<div class="t" style="top:361px;font-size:7.5px;line-height:9px;color:#0c0c0c;left:856.70px;">Орлов Александр Владимирович</div>
<div class="t" style="top:371px;font-size:7.8px;line-height:9px;color:#141414;left:48.80px;font-weight:bold;">Групповая продажа животных</div>
<div class="t" style="top:382px;font-size:7.8px;line-height:9px;color:#141414;left:58.50px;font-weight:bold;">Продажа</div>
<div class="t" style="top:382px;font-size:7.62px;line-height:9px;color:#0c0c0c;left:238.00px;">Групповая продажа животных НВ00-000001 от 05.01.2020 12:00:00</div>
<div class="t" style="top:382px;font-size:7.56px;line-height:9px;color:#0c0c0c;left:547.30px;">Реализация товаров и услуг НВ00-000006 от 05.01.2020 12:00:00</div>
<div class="t" style="top:382px;font-size:7.5px;line-height:9px;color:#0c0c0c;left:856.70px;">Орлов Александр Владимирович</div>
<div class="t" style="top:392px;font-size:7.42px;line-height:9px;color:#0c0c0c;left:39.20px;">06.01.2020</div>
<div class="t" style="top:402px;font-size:7.8px;line-height:9px;color:#141414;left:48.80px;font-weight:bold;">Групповой падеж, забой</div>
<div class="t" style="top:413px;font-size:7.8px;line-height:9px;color:#141414;left:58.50px;font-weight:bold;">Падеж</div>
<div class="t" style="top:413px;font-size:7.62px;line-height:9px;color:#0c0c0c;left:238.00px;">Групповой падеж, забой НВ00-000001 от 06.01.2020 12:00:00</div>
<div class="t" style="top:413px;font-size:7.56px;line-height:9px;color:#0c0c0c;left:547.30px;">Списание на расходы НВ00-000011 от 06.01.2020 14:00:00</div>
<div class="t" style="top:413px;font-size:7.5px;line-height:9px;color:#0c0c0c;left:856.70px;">Орлов Александр Владимирович</div>
<div class="t" style="top:423px;font-size:7.8px;line-height:9px;color:#141414;left:58.50px;font-weight:bold;">Забой</div>
<div class="t" style="top:423px;font-size:7.62px;line-height:9px;color:#0c0c0c;left:238.00px;">Групповой падеж, забой НВ00-000002 от 06.01.2020 12:00:01</div>
<div class="t" style="top:423px;font-size:7.56px;line-height:9px;color:#0c0c0c;left:547.30px;">Передача продукции из кладовой НВ00-000067 от 06.01.2020 11:00:00</div>
<div class="t" style="top:423px;font-size:7.5px;line-height:9px;color:#0c0c0c;left:856.70px;">Орлов Александр Владимирович</div>
<div class="t" style="top:434px;font-size:7.8px;line-height:9px;color:#141414;left:58.50px;font-weight:bold;">Забой</div>
<div class="t" style="top:434px;font-size:7.62px;line-height:9px;color:#0c0c0c;left:238.00px;">Групповой падеж, забой НВ00-000002 от 06.01.2020 12:00:01</div>
<div class="t" style="top:434px;font-size:7.56px;line-height:9px;color:#0c0c0c;left:547.30px;">Передача материалов в кладовую НВ00-000068 от 06.01.2020 11:00:00</div>
<div class="t" style="top:434px;font-size:7.5px;line-height:9px;color:#0c0c0c;left:856.70px;">Орлов Александр Владимирович</div>
<div class="t" style="top:444px;font-size:7.42px;line-height:9px;color:#0c0c0c;left:39.20px;">20.01.2020</div>
<div class="t" style="top:454px;font-size:7.8px;line-height:9px;color:#141414;left:48.80px;font-weight:bold;">Групповой опорос</div>
<div class="t" style="top:465px;font-size:7.8px;line-height:9px;color:#141414;left:58.50px;font-weight:bold;">Опорос</div>
<div class="t" style="top:465px;font-size:7.62px;line-height:9px;color:#0c0c0c;left:238.00px;">Групповой опорос НВ00-000001 от 20.01.2020 12:00:00</div>
<div class="t" style="top:465px;font-size:7.56px;line-height:9px;color:#0c0c0c;left:547.30px;">Передача продукции из кладовой НВ00-000069 от 20.01.2020 11:00:00</div>
<div class="t" style="top:465px;font-size:7.5px;line-height:9px;color:#0c0c0c;left:856.70px;">Орлов Александр Владимирович</div>
<div class="t" style="top:475px;font-size:7.42px;line-height:9px;color:#0c0c0c;left:39.20px;">22.01.2020</div>
<div class="t" style="top:485px;font-size:7.8px;line-height:9px;color:#141414;left:48.80px;font-weight:bold;">Групповое взвешивание животных</div>
<div class="t" style="top:496px;font-size:7.8px;line-height:9px;color:#141414;left:58.50px;font-weight:bold;">Взвешивание</div>
<div class="t" style="top:496px;font-size:7.62px;line-height:9px;color:#0c0c0c;left:238.00px;">Групповое взвешивание животных НВ00-000003 от 22.01.2020 16:00:00</div>
<div class="t" style="top:496px;font-size:7.56px;line-height:9px;color:#0c0c0c;left:547.30px;">Передача продукции из кладовой НВ00-000078 от 22.01.2020 11:00:00</div>
<div class="t" style="top:496px;font-size:7.5px;line-height:9px;color:#0c0c0c;left:856.70px;">Орлов Александр Владимирович</div>
<div class="t" style="top:506px;font-size:7.42px;line-height:9px;color:#0c0c0c;left:39.20px;">25.01.2020</div>
<div class="t" style="top:517px;font-size:7.8px;line-height:9px;color:#141414;left:48.80px;font-weight:bold;">Групповой отъем</div>
<div class="t" style="top:527px;font-size:7.8px;line-height:9px;color:#141414;left:58.50px;font-weight:bold;">Отъем</div>
<div class="t" style="top:527px;font-size:7.62px;line-height:9px;color:#0c0c0c;left:238.00px;">Групповой отъем НВ00-000001 от 25.01.2020 19:00:00</div>
<div class="t" style="top:527px;font-size:7.56px;line-height:9px;color:#0c0c0c;left:547.30px;">Сборка (разборка) товаров НВ00-000012 от 25.01.2020 12:00:00</div>
<div class="t" style="top:527px;font-size:7.5px;line-height:9px;color:#0c0c0c;left:856.70px;">Орлов Александр Владимирович</div>
<div class="t" style="top:537px;font-size:7.42px;line-height:9px;color:#0c0c0c;left:39.20px;">26.01.2020</div>
<div class="t" style="top:548px;font-size:7.8px;line-height:9px;color:#141414;left:48.80px;font-weight:bold;">Групповое лечение животных</div>
</div></div>
</body></html>
